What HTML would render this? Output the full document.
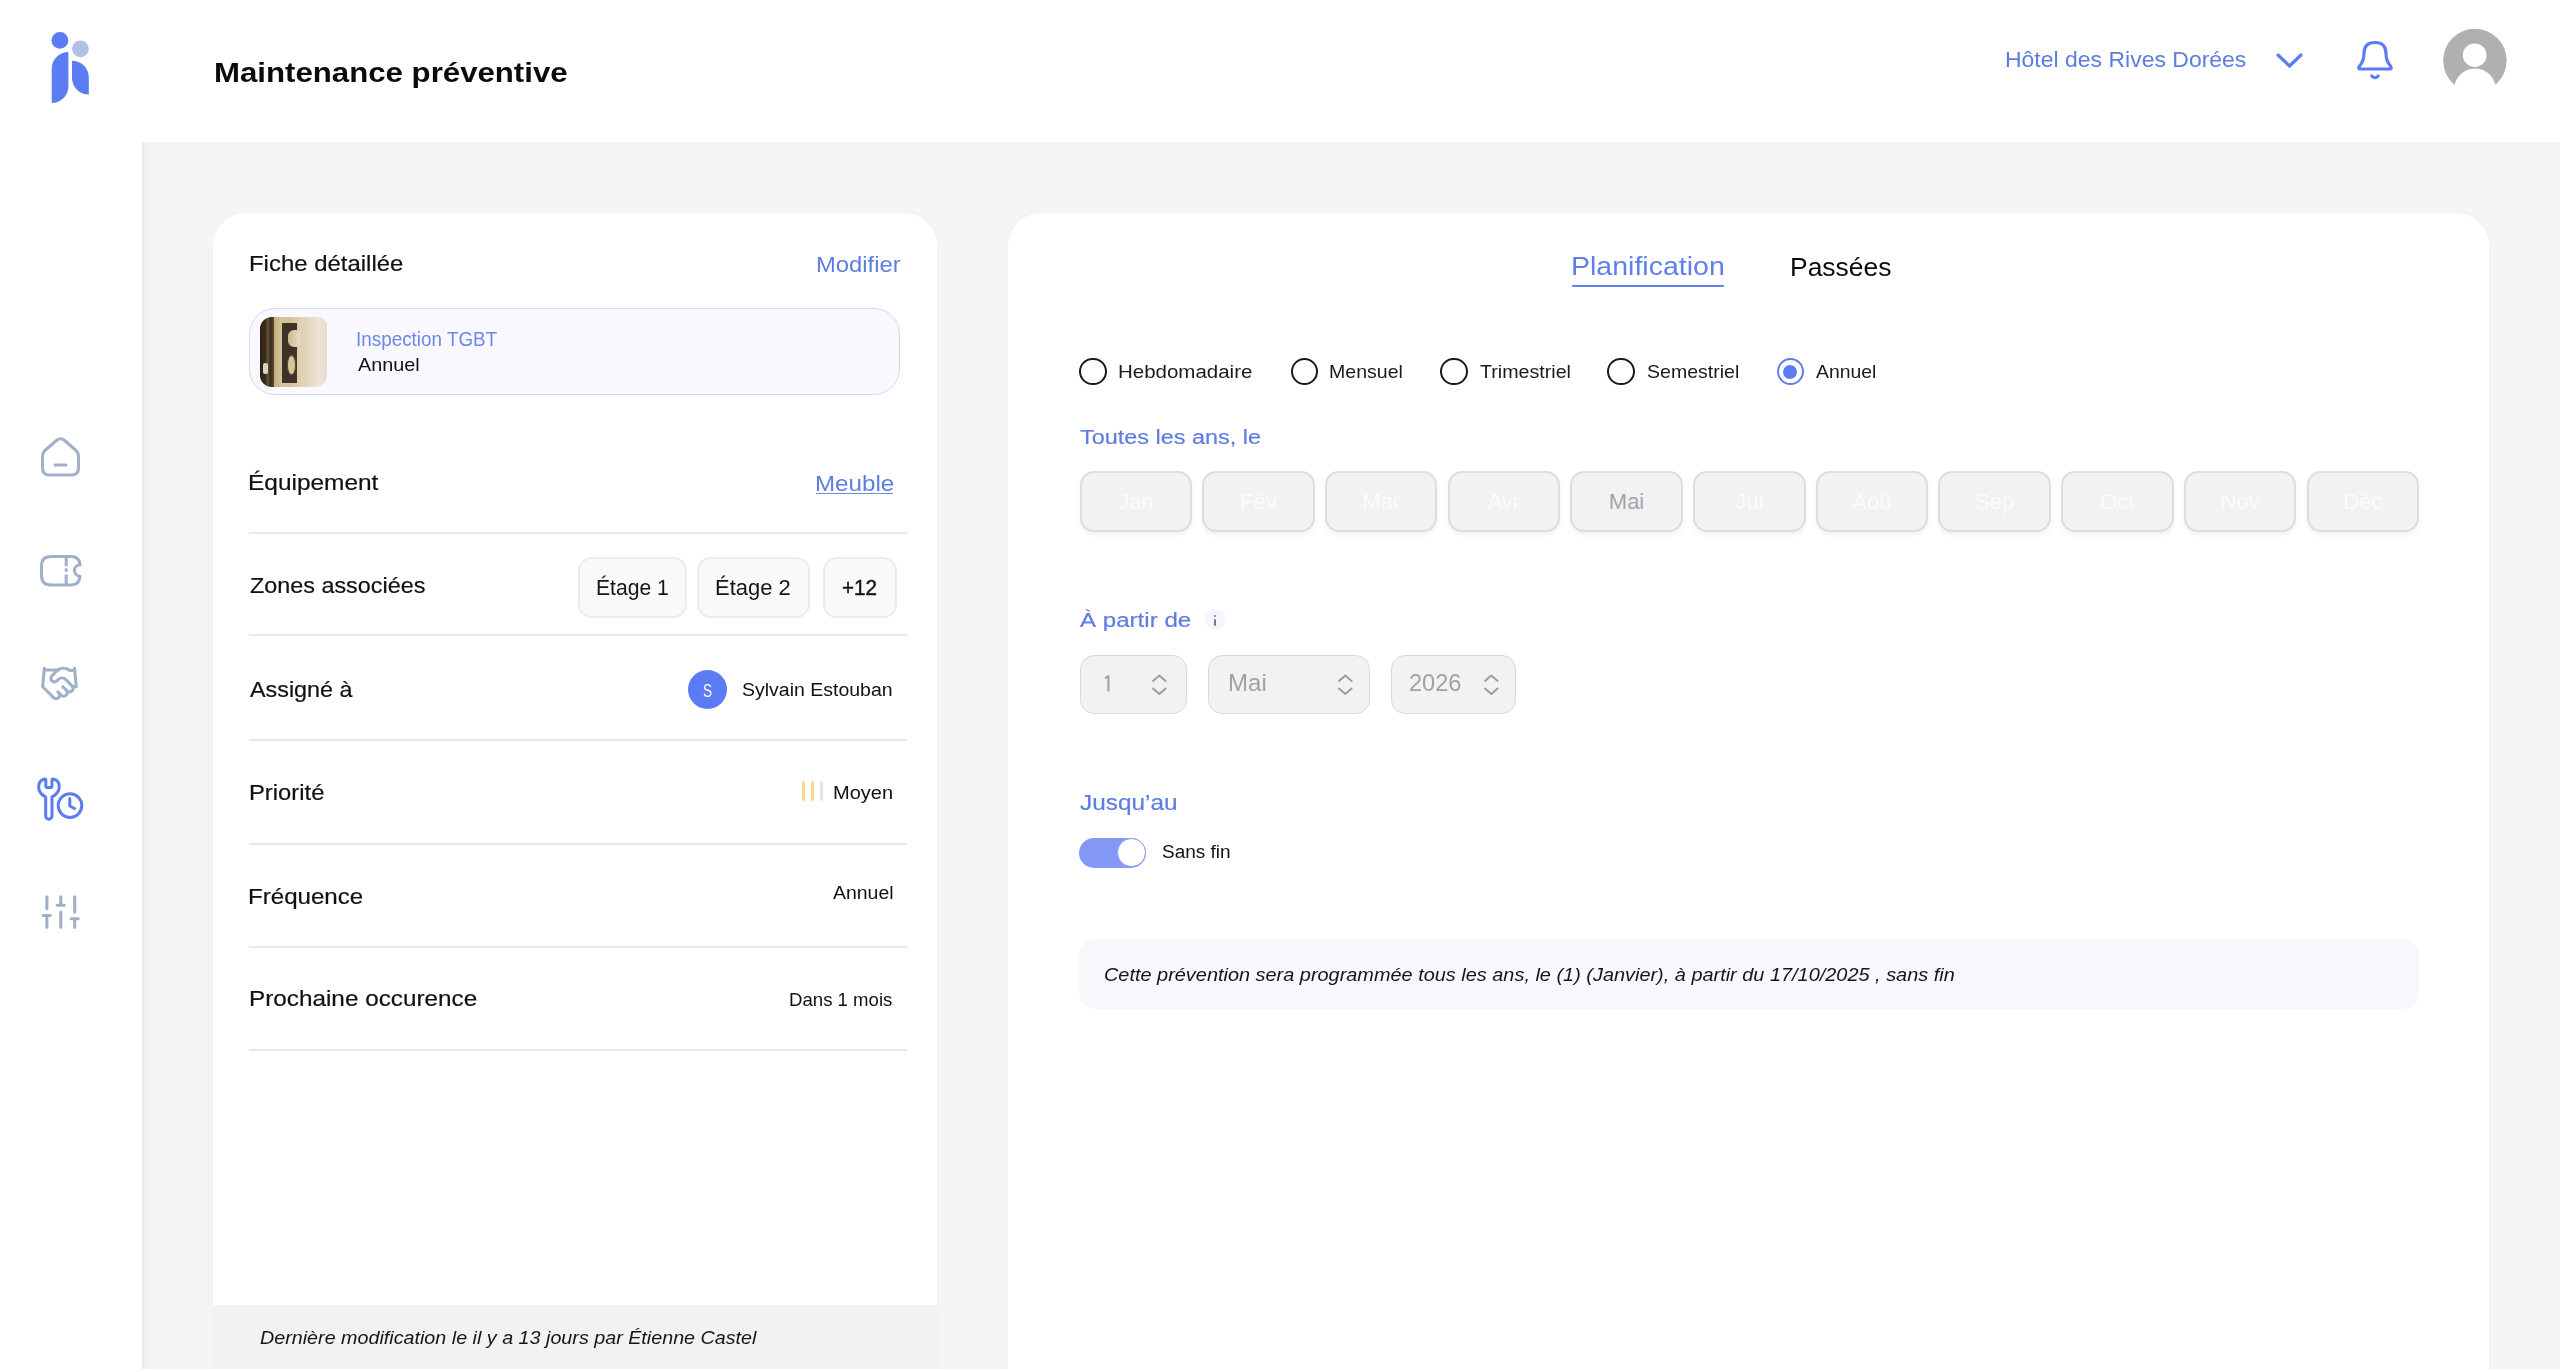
<!DOCTYPE html>
<html lang="fr"><head><meta charset="utf-8"><title>Maintenance préventive</title>
<style>
html,body{margin:0;padding:0;}
body{width:2560px;height:1369px;position:relative;overflow:hidden;background:#ffffff;font-family:'Liberation Sans',sans-serif;}
.t{position:absolute;white-space:nowrap;transform-origin:0 0;}
.abs{position:absolute;}
#main{position:absolute;left:142px;top:142px;width:2418px;height:1227px;background:#f5f5f5;box-shadow:inset 3px 0 2px -2px rgba(0,0,0,0.04), inset 16px 0 14px -12px rgba(0,0,0,0.035);}
#lcard{position:absolute;left:213px;top:213px;width:724px;height:1200px;background:#fff;border-radius:33px 33px 0 0;box-shadow:0 0 6px rgba(0,0,0,0.025);}
#lfoot{position:absolute;left:213px;top:1305px;width:724px;height:64px;background:#f2f2f2;}
#rcard{position:absolute;left:1008px;top:213px;width:1481px;height:1200px;background:#fff;border-radius:33px 33px 0 0;box-shadow:0 0 6px rgba(0,0,0,0.025);}
#insp{position:absolute;left:249.2px;top:308.2px;width:648.6px;height:84.4px;border:1.6px solid #d5d8f0;border-radius:26px;background:#f8f8fe;}
.div{position:absolute;left:249px;width:658px;height:2px;background:#e9e9e9;}
.chip{position:absolute;top:557px;height:57px;border:2px solid #ececec;border-radius:14px;background:#f9f9f9;}
.radio{position:absolute;top:357.6px;width:23.6px;height:23.6px;border:2px solid #1a1a1a;border-radius:50%;}
.mb{position:absolute;top:471.1px;width:108.5px;height:57.4px;border:2px solid #dedede;border-radius:14px;background:#f2f2f2;box-shadow:0 3px 5px rgba(0,0,0,0.05);text-align:center;font-size:22px;line-height:58px;}
.sel{position:absolute;top:654.5px;height:57.6px;border:1.8px solid #d9d9d9;border-radius:14px;background:#f2f2f2;}

</style></head><body>
<div id="main"></div>
<div id="lcard"></div>
<div id="lfoot"></div>
<div id="rcard"></div>

<!-- logo -->
<svg class="abs" style="left:0;top:0" width="142" height="142" viewBox="0 0 142 142">
 <circle cx="59.9" cy="40.4" r="8.4" fill="#5b7cf3"/>
 <circle cx="80.4" cy="48.8" r="8.4" fill="#b3bfe3"/>
 <path d="M68.4 52 V86.3 A16.7 16.7 0 0 1 51.7 103 V68.7 A16.7 16.7 0 0 1 68.4 52 Z" fill="#5b7cf3"/>
 <path d="M72 60.7 A16.8 16.8 0 0 1 88.8 77.5 V94.6 A16.8 16.8 0 0 1 72 77.8 Z" fill="#5b7cf3"/>
</svg>

<!-- sidebar icons -->
<svg class="abs" style="left:0;top:400px" width="142" height="560" viewBox="0 400 142 560" fill="none" stroke="#a0b0c6" stroke-width="3" stroke-linecap="round" stroke-linejoin="round">
 <path d="M42.5 457 Q42.5 452 46 449.5 L57 440 Q60.5 437.5 64 440 L75 449.5 Q78.5 452 78.5 457 L78.5 468 Q78.5 475 71.5 475 L49.5 475 Q42.5 475 42.5 468 Z"/>
 <path d="M55 465 L66 465"/>
 <path d="M51 556.5 L71 556.5 Q79.5 556.5 80 565 A5.6 5.6 0 0 0 80 576.2 Q79.5 585 71 585 L51 585 Q41.5 585 41.5 575.5 L41.5 566 Q41.5 556.5 51 556.5 Z"/>
 <path d="M66.2 557 V566.2 M66.2 574.5 V584" stroke-linecap="butt"/><path d="M66.2 569.6 V570.6"/>
 <g transform="translate(39.3 663.2) scale(1.68)" stroke-width="1.8">
  <path d="m11 17 2 2a1 1 0 1 0 3-3"/>
  <path d="m14 14 2.5 2.5a1 1 0 1 0 3-3l-3.88-3.88a3 3 0 0 0-4.24 0l-.88.88a1 1 0 1 1-3-3l2.81-2.81a5.79 5.79 0 0 1 7.06-.87l.47.28a2 2 0 0 0 1.42.25L21 4"/>
  <path d="m21 3 1 11h-2"/>
  <path d="M3 3 2 14l6.5 6.5a1 1 0 1 0 3-3"/>
  <path d="M3 4h8"/>
 </g>
 <g stroke="#5b7cf3">
  <path d="M45.7 816 V797 C40 794 37.8 789 39 784 C40 781 42 779.5 44.8 779 Q45.8 779 45.8 780 V786 Q45.8 787.5 47.3 787.5 H50.5 Q52 787.5 52 786 V780 Q52 779 53 779 C56 779.5 58 781 59 784 C60 789 57.8 794 52 797 V816 A3.15 3.15 0 0 1 45.7 816 Z"/>
  <circle cx="70" cy="805.6" r="11.8"/>
  <path d="M69.8 798.5 V806 L74.5 808.5"/>
 </g>
 <g transform="translate(39.9 891.8) scale(1.74 1.69)" stroke-width="1.8">
  <path d="M4 21v-7 M4 10V3 M12 21v-9 M12 8V3 M20 21v-5 M20 12V3 M2 14h4 M10 8h4 M18 16h4"/>
 </g>
</svg>

<!-- header right icons -->
<svg class="abs" style="left:2260px;top:20px" width="300" height="100" viewBox="2260 20 300 100">
 <path d="M2278 55 L2289.5 66 L2301 55" fill="none" stroke="#5b7cf3" stroke-width="3.2" stroke-linecap="round" stroke-linejoin="round"/>
 <g transform="translate(2345 30)" fill="none" stroke="#5b7cf3" stroke-width="3.2" stroke-linecap="round" stroke-linejoin="round">
  <path d="M15.5 39 L44.5 39 Q47.5 39 45.5 36 Q41 31 41 23.5 Q41 12.5 30 12.5 Q19 12.5 19 23.5 Q19 31 14.5 36 Q12.5 39 15.5 39 Z"/>
  <path d="M26.8 46 Q30 49.5 33.2 46"/>
 </g>
 <defs><clipPath id="avc"><circle cx="2474.9" cy="60.5" r="31.7"/></clipPath></defs>
 <circle cx="2474.9" cy="60.5" r="31.7" fill="#b0b0b0"/>
 <circle cx="2474.7" cy="55.2" r="11.8" fill="#fff"/>
 <circle cx="2475" cy="89.3" r="20.8" fill="#fff"/>
</svg>

<!-- inspection box -->
<div id="insp"></div>
<div class="abs" style="left:259.9px;top:316.8px;width:67.5px;height:70.4px;border-radius:12px 9px 12px 12px;overflow:hidden;background:linear-gradient(90deg,#d3c193 0%,#d6c59c 45%,#e2d6bd 70%,#ece5d8 88%,#e4ddd2 100%);">
 <div class="abs" style="left:0;top:0;width:14.4px;height:71px;background:linear-gradient(90deg,#2a1f16 0%,#3d2d1f 40%,#6a5539 55%,#3a2b1e 75%,#5c4a33 100%);"></div>
 <div class="abs" style="left:3px;top:46px;width:5px;height:11px;background:#d8d4cc;border-radius:2px;filter:blur(0.6px);"></div>
 <div class="abs" style="left:14.4px;top:0;width:7.3px;height:71px;background:linear-gradient(90deg,#c2ad7c,#d8c698);"></div>
 <div class="abs" style="left:22.3px;top:6.6px;width:14.8px;height:60px;background:#3f3128;"></div>
 <div class="abs" style="left:28px;top:13.5px;width:12px;height:17px;border-radius:6px 4px 4px 6px;background:linear-gradient(90deg,#cdbb8e,#e6dcc4);"></div>
 <div class="abs" style="left:27.6px;top:38.2px;width:8.5px;height:19.7px;border-radius:50%;background:#d6c597;border:1px solid #5a4a3a;box-sizing:border-box;"></div>
</div>
<!-- dividers -->
<div class="div" style="top:531.6px"></div>
<div class="div" style="top:634.4px"></div>
<div class="div" style="top:739px"></div>
<div class="div" style="top:842.5px"></div>
<div class="div" style="top:946px"></div>
<div class="div" style="top:1049px"></div>

<!-- Meuble underline -->
<div class="abs" style="left:816.4px;top:492.6px;width:77px;height:1.6px;background:#6f8de8;"></div>

<!-- chips -->
<div class="chip" style="left:578.3px;width:105px;"></div>
<div class="chip" style="left:697px;width:108.6px;"></div>
<div class="chip" style="left:823px;width:69.8px;"></div>

<!-- avatar S -->
<div class="abs" style="left:687.8px;top:670px;width:39px;height:39px;border-radius:50%;background:#5c7cf5;"></div>

<!-- priority bars -->
<div class="abs" style="left:802.1px;top:780.7px;width:3.3px;height:20.2px;border-radius:1.6px;background:#f5d987;"></div>
<div class="abs" style="left:810.7px;top:780.7px;width:3.3px;height:20.2px;border-radius:1.6px;background:#f5d987;"></div>
<div class="abs" style="left:819.5px;top:780.7px;width:3.3px;height:20.2px;border-radius:1.6px;background:#e5e5e9;"></div>

<!-- tabs underline -->
<div class="abs" style="left:1572px;top:284.5px;width:152.4px;height:2.5px;background:#5f80ea;border-radius:1px;"></div>

<!-- radios -->
<div class="radio" style="left:1079.3px"></div>
<div class="radio" style="left:1290.8px"></div>
<div class="radio" style="left:1440.2px"></div>
<div class="radio" style="left:1607.4px"></div>
<div class="radio" style="left:1776.5px;border-color:#5b7cf3"></div>
<div class="abs" style="left:1783px;top:364.5px;width:14px;height:14px;border-radius:50%;background:#5b7cf3;"></div>

<!-- info icon -->
<div class="abs" style="left:1204.8px;top:609.3px;width:21px;height:21px;border-radius:50%;background:#f4f6fc;"></div>
<div class="abs" style="left:1214.4px;top:615px;width:1.8px;height:1.8px;border-radius:50%;background:#777c86;"></div>
<div class="abs" style="left:1214.4px;top:618.8px;width:1.8px;height:7.4px;border-radius:1px;background:#777c86;"></div>

<!-- selects -->
<div class="sel" style="left:1079.5px;width:105.6px;"></div>
<div class="sel" style="left:1207.5px;width:160.7px;"></div>
<div class="sel" style="left:1390.5px;width:123.7px;"></div>
<svg class="abs" style="left:1090px;top:665px" width="420" height="40" viewBox="1090 665 420 40" fill="none" stroke="#9b9b9b" stroke-width="1.9" stroke-linecap="round" stroke-linejoin="round">
 <path d="M1105 678.3 L1108.4 676.2 V691.6" stroke="#a2a2a2" stroke-width="2.1" stroke-linecap="butt"/>
 <path d="M1153 681 L1159.3 675.5 L1165.6 681 M1153 688.5 L1159.3 694 L1165.6 688.5"/>
 <path d="M1339 681 L1345.3 675.5 L1351.6 681 M1339 688.5 L1345.3 694 L1351.6 688.5"/>
 <path d="M1485 681 L1491.3 675.5 L1497.6 681 M1485 688.5 L1491.3 694 L1497.6 688.5"/>
</svg>

<!-- toggle -->
<div class="abs" style="left:1079.1px;top:837.7px;width:67.2px;height:30px;border-radius:15px;background:#8399f5;"></div>
<div class="abs" style="left:1117.3px;top:838.2px;width:26.6px;height:26.6px;border-radius:50%;background:#fff;border:1.2px solid #8a9cf5;"></div>

<!-- summary box -->
<div class="abs" style="left:1079px;top:939px;width:1340px;height:70px;border-radius:16px;background:#f7f8fc;"></div>

<div class="mb" style="left:1079.5px;"><span style="color:#fbfbfb">Jan</span></div>
<div class="mb" style="left:1202.2px;"><span style="color:#fbfbfb">Fév</span></div>
<div class="mb" style="left:1324.9px;"><span style="color:#fbfbfb">Mar</span></div>
<div class="mb" style="left:1447.6px;"><span style="color:#fbfbfb">Avr</span></div>
<div class="mb" style="left:1570.3px;"><span style="color:#a1a5ac">Mai</span></div>
<div class="mb" style="left:1693.0px;"><span style="color:#fbfbfb">Jui</span></div>
<div class="mb" style="left:1815.7px;"><span style="color:#fbfbfb">Aoû</span></div>
<div class="mb" style="left:1938.4px;"><span style="color:#fbfbfb">Sep</span></div>
<div class="mb" style="left:2061.1px;"><span style="color:#fbfbfb">Oct</span></div>
<div class="mb" style="left:2183.8px;"><span style="color:#fbfbfb">Nov</span></div>
<div class="mb" style="left:2306.5px;"><span style="color:#fbfbfb">Déc</span></div>
<div class="t" style="left:213.70px;top:54.00px;font-size:28.47px;line-height:36px;font-weight:bold;color:#0b0b0b;transform:scaleX(1.0956);">Maintenance préventive</div>
<div class="t" style="left:2005.43px;top:47.00px;font-size:21.50px;line-height:27px;font-weight:normal;color:#5e7de2;transform:scaleX(1.0687);">Hôtel des Rives Dorées</div>
<div class="t" style="left:248.69px;top:250.30px;font-size:21.64px;line-height:28px;font-weight:normal;color:#111111;transform:scaleX(1.1068);-webkit-text-stroke:0.2px currentColor;">Fiche détaillée</div>
<div class="t" style="left:815.68px;top:250.80px;font-size:21.21px;line-height:27px;font-weight:normal;color:#5e7de2;transform:scaleX(1.1230);">Modifier</div>
<div class="t" style="left:356.47px;top:325.70px;font-size:20.33px;line-height:26px;font-weight:normal;color:#6a89e6;transform:scaleX(0.9278);">Inspection TGBT</div>
<div class="t" style="left:358.00px;top:353.20px;font-size:18.45px;line-height:24px;font-weight:normal;color:#111111;transform:scaleX(1.0743);">Annuel</div>
<div class="t" style="left:248.16px;top:470.40px;font-size:21.50px;line-height:27px;font-weight:normal;color:#111111;transform:scaleX(1.1365);-webkit-text-stroke:0.2px currentColor;">Équipement</div>
<div class="t" style="left:815.28px;top:470.50px;font-size:21.50px;line-height:27px;font-weight:normal;color:#5e7de2;transform:scaleX(1.1231);">Meuble</div>
<div class="t" style="left:249.50px;top:573.40px;font-size:21.50px;line-height:27px;font-weight:normal;color:#111111;transform:scaleX(1.0867);-webkit-text-stroke:0.2px currentColor;">Zones associées</div>
<div class="t" style="left:595.63px;top:573.70px;font-size:21.79px;line-height:28px;font-weight:normal;color:#151515;transform:scaleX(0.9693);">Étage 1</div>
<div class="t" style="left:714.79px;top:573.70px;font-size:21.79px;line-height:28px;font-weight:normal;color:#151515;transform:scaleX(1.0085);">Étage 2</div>
<div class="t" style="left:842.05px;top:573.70px;font-size:21.79px;line-height:28px;font-weight:normal;color:#151515;transform:scaleX(0.9488);-webkit-text-stroke:0.45px currentColor;">+12</div>
<div class="t" style="left:249.80px;top:677.10px;font-size:21.50px;line-height:27px;font-weight:normal;color:#111111;transform:scaleX(1.0861);-webkit-text-stroke:0.2px currentColor;">Assigné à</div>
<div class="t" style="left:703.00px;top:678.50px;font-size:18.88px;line-height:24px;font-weight:normal;color:#ffffff;transform:scaleX(0.7250);">S</div>
<div class="t" style="left:742.30px;top:679.40px;font-size:18.01px;line-height:23px;font-weight:normal;color:#111111;transform:scaleX(1.0827);">Sylvain Estouban</div>
<div class="t" style="left:248.69px;top:779.50px;font-size:21.50px;line-height:27px;font-weight:normal;color:#111111;transform:scaleX(1.1067);-webkit-text-stroke:0.2px currentColor;">Priorité</div>
<div class="t" style="left:833.21px;top:781.00px;font-size:18.30px;line-height:23px;font-weight:normal;color:#111111;transform:scaleX(1.0948);">Moyen</div>
<div class="t" style="left:248.18px;top:883.70px;font-size:21.50px;line-height:27px;font-weight:normal;color:#111111;transform:scaleX(1.1207);-webkit-text-stroke:0.2px currentColor;">Fréquence</div>
<div class="t" style="left:833.20px;top:882.10px;font-size:18.01px;line-height:23px;font-weight:normal;color:#111111;transform:scaleX(1.0809);">Annuel</div>
<div class="t" style="left:248.86px;top:985.60px;font-size:21.35px;line-height:27px;font-weight:normal;color:#111111;transform:scaleX(1.1382);-webkit-text-stroke:0.2px currentColor;">Prochaine occurence</div>
<div class="t" style="left:788.98px;top:988.90px;font-size:18.16px;line-height:23px;font-weight:normal;color:#111111;transform:scaleX(1.0248);">Dans 1 mois</div>
<div class="t" style="left:259.80px;top:1326.50px;font-size:17.72px;line-height:23px;font-weight:normal;font-style:italic;color:#151515;transform:scaleX(1.1137);">Dernière modification le il y a 13 jours par Étienne Castel</div>
<div class="t" style="left:1570.68px;top:250.10px;font-size:25.71px;line-height:33px;font-weight:normal;color:#5f80ea;transform:scaleX(1.1094);">Planification</div>
<div class="t" style="left:1789.60px;top:250.60px;font-size:25.13px;line-height:32px;font-weight:normal;color:#0b0b0b;transform:scaleX(1.0522);">Passées</div>
<div class="t" style="left:1118.05px;top:361.00px;font-size:17.86px;line-height:23px;font-weight:normal;color:#1a1a1a;transform:scaleX(1.1470);">Hebdomadaire</div>
<div class="t" style="left:1329.41px;top:361.00px;font-size:17.86px;line-height:23px;font-weight:normal;color:#1a1a1a;transform:scaleX(1.0940);">Mensuel</div>
<div class="t" style="left:1480.30px;top:361.10px;font-size:17.86px;line-height:23px;font-weight:normal;color:#1a1a1a;transform:scaleX(1.1002);">Trimestriel</div>
<div class="t" style="left:1647.00px;top:361.10px;font-size:17.86px;line-height:23px;font-weight:normal;color:#1a1a1a;transform:scaleX(1.0936);">Semestriel</div>
<div class="t" style="left:1816.30px;top:361.10px;font-size:17.86px;line-height:23px;font-weight:normal;color:#1a1a1a;transform:scaleX(1.0852);">Annuel</div>
<div class="t" style="left:1080.00px;top:423.10px;font-size:21.06px;line-height:27px;font-weight:normal;color:#5e7de2;transform:scaleX(1.1136);-webkit-text-stroke:0.2px currentColor;">Toutes les ans, le</div>
<div class="t" style="left:1080.00px;top:606.40px;font-size:20.92px;line-height:27px;font-weight:normal;color:#5e7de2;transform:scaleX(1.1532);-webkit-text-stroke:0.2px currentColor;">À partir de</div>
<div class="t" style="left:1080.20px;top:789.30px;font-size:21.21px;line-height:27px;font-weight:normal;color:#5e7de2;transform:scaleX(1.1489);-webkit-text-stroke:0.2px currentColor;">Jusqu’au</div>
<div class="t" style="left:1161.70px;top:841.00px;font-size:18.01px;line-height:23px;font-weight:normal;color:#111111;transform:scaleX(1.0542);">Sans fin</div>
<div class="t" style="left:1103.63px;top:962.70px;font-size:18.59px;line-height:24px;font-weight:normal;font-style:italic;color:#151515;transform:scaleX(1.0713);">Cette prévention sera programmée tous les ans, le (1) (Janvier), à partir du 17/10/2025 , sans fin</div>
<div class="t" style="left:1227.96px;top:669.20px;font-size:23.09px;line-height:29px;font-weight:normal;color:#a2a2a2;transform:scaleX(1.0411);">Mai</div>
<div class="t" style="left:1408.98px;top:669.20px;font-size:23.09px;line-height:29px;font-weight:normal;color:#a2a2a2;transform:scaleX(1.0221);">2026</div>
</body></html>
